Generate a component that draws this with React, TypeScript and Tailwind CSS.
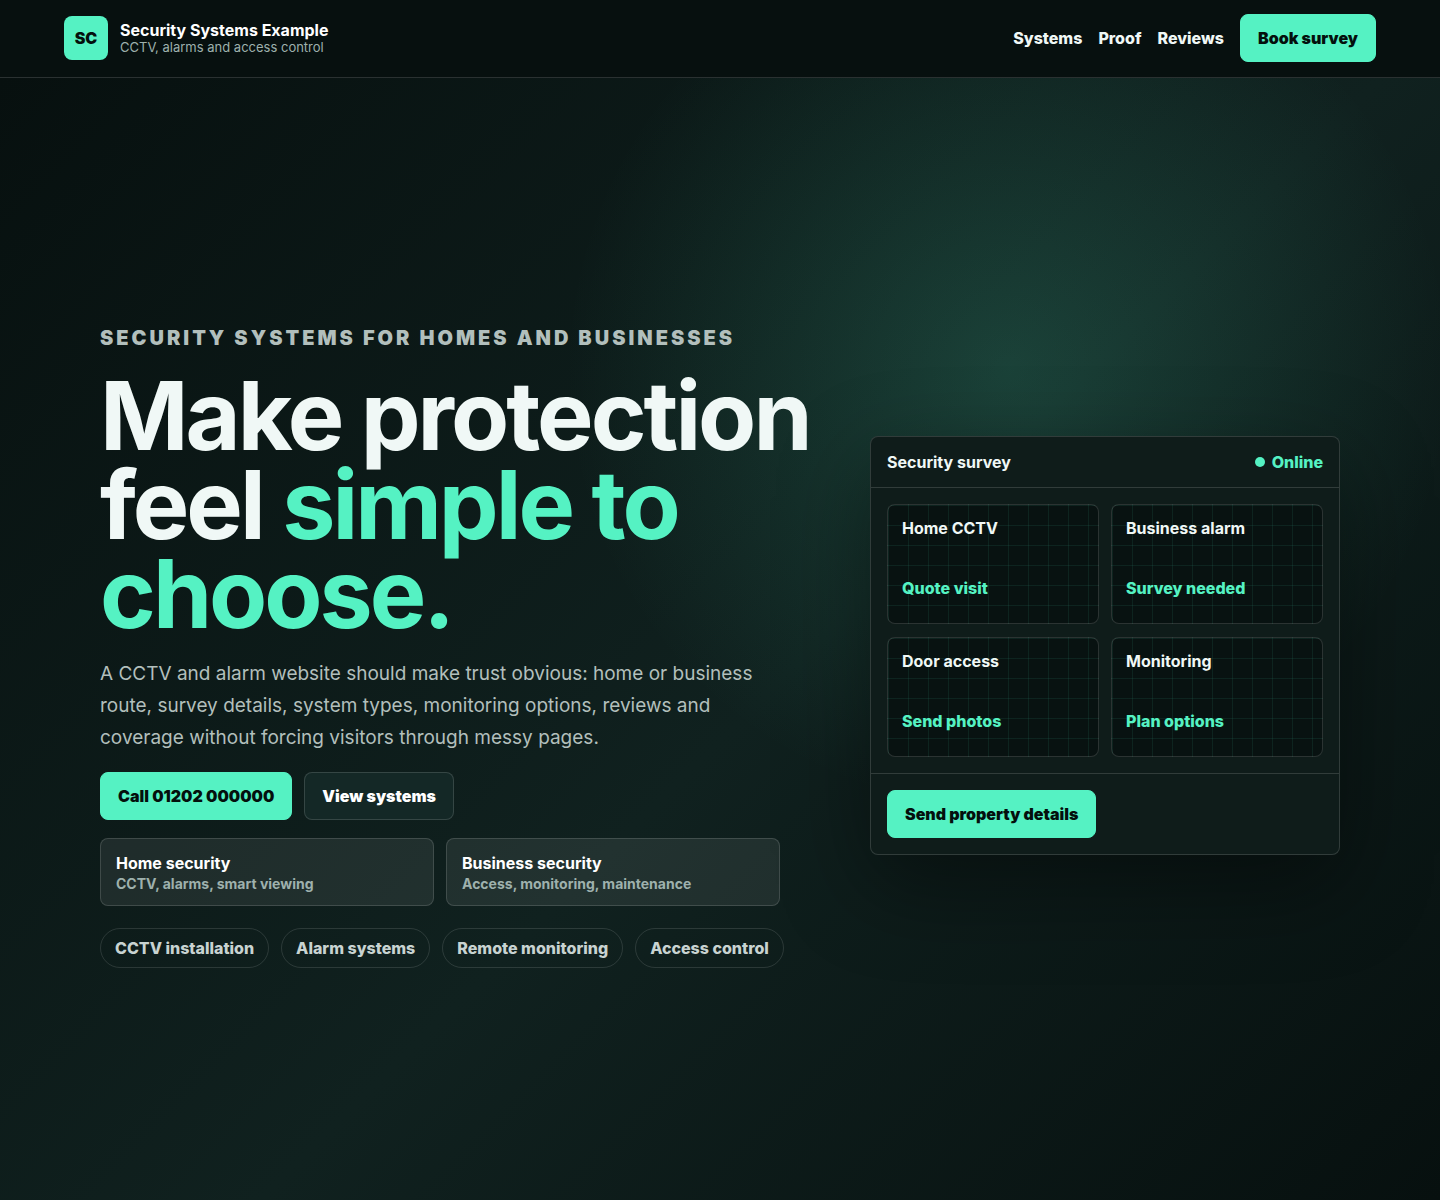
import React from "react";

const button =
  "inline-flex min-h-12 items-center justify-center rounded-lg border px-[17px] font-black";
const primary = "border-[#55f2c3] bg-[#55f2c3] text-[#04100d]";

const navItems = ["Systems", "Proof", "Reviews"];
const routes = [
  { title: "Home security", text: "CCTV, alarms, smart viewing" },
  { title: "Business security", text: "Access, monitoring, maintenance" },
];
const chips = ["CCTV installation", "Alarm systems", "Remote monitoring", "Access control"];
const zones = [
  { title: "Home CCTV", action: "Quote visit" },
  { title: "Business alarm", action: "Survey needed" },
  { title: "Door access", action: "Send photos" },
  { title: "Monitoring", action: "Plan options" },
];

function Header() {
  return (
    <header className="flex items-center justify-between border-b border-white/[0.14] bg-[#07100f] px-16 pt-3.5 pb-[15px]">
      <a href="#top" className="flex items-center gap-3">
        <span className="grid size-11 place-items-center rounded-lg bg-[#55f2c3] font-black text-[#04100d]">
          SC
        </span>
        <span className="flex flex-col pt-0.5">
          <strong className="text-base leading-[17px] font-bold text-white">
            Security Systems Example
          </strong>
          <small className="text-[13px] leading-[17px] text-[#9eb1ad]">
            CCTV, alarms and access control
          </small>
        </span>
      </a>
      <nav className="flex items-center gap-4 font-extrabold">
        {navItems.map((item) => (
          <a key={item} href={`#${item.toLowerCase()}`}>
            {item}
          </a>
        ))}
        <a href="#survey" className={`${button} ${primary}`}>
          Book survey
        </a>
      </nav>
    </header>
  );
}

function Intro() {
  return (
    <div>
      <p className="mb-[17px] text-xl leading-8 font-black tracking-[3px] text-[#b2bfbc] uppercase">
        Security systems for homes and businesses
      </p>
      <h1 className="text-[95px] leading-[89px] font-bold tracking-[-3px] text-[#f0f8f6]">
        Make protection feel <span className="text-[#55f2c3]">simple to choose.</span>
      </h1>
      <p className="mt-5 max-w-[680px] text-[19px] leading-8 text-[#b2bfbc]">
        A CCTV and alarm website should make trust obvious: home or business route, survey details,
        system types, monitoring options, reviews and coverage without forcing visitors through
        messy pages.
      </p>
      <div className="mt-[18px] flex flex-wrap gap-3">
        <a href="tel:01202000000" className={`${button} ${primary}`}>
          Call 01202 000000
        </a>
        <a href="#systems" className={`${button} border-white/[0.14] bg-[#142826] text-white`}>
          View systems
        </a>
      </div>
      <div className="mt-[18px] grid max-w-[680px] grid-cols-2 gap-3">
        {routes.map((route) => (
          <a
            key={route.title}
            href="#survey"
            className="flex flex-col rounded-lg border border-white/[0.14] bg-white/[0.08] px-[15px] py-3"
          >
            <strong className="leading-6 font-bold text-white">{route.title}</strong>
            <span className="text-sm leading-[18px] font-bold text-[#9eb1ad]">{route.text}</span>
          </a>
        ))}
      </div>
      <ul className="mt-[22px] flex flex-wrap gap-3">
        {chips.map((chip) => (
          <li
            key={chip}
            className="flex h-10 items-center rounded-full border border-white/[0.12] px-3.5 font-extrabold text-[#c8d3d1]"
          >
            {chip}
          </li>
        ))}
      </ul>
    </div>
  );
}

function SurveyPanel() {
  return (
    <section className="rounded-lg border border-white/[0.14] bg-[#0f1c1a] shadow-[0_30px_90px_rgba(0,0,0,0.42)]">
      <div className="flex items-center justify-between border-b border-white/[0.14] px-4 py-[13px] leading-6">
        <h2 className="font-bold">Security survey</h2>
        <span className="flex items-center gap-[7px] font-extrabold text-[#55f2c3]">
          <i className="size-2.5 rounded-full bg-[#55f2c3]" />
          Online
        </span>
      </div>
      <div className="grid grid-cols-2 gap-x-3 gap-y-[13px] p-4">
        {zones.map((zone) => (
          <article
            key={zone.title}
            className="min-h-[120px] rounded-lg border border-white/[0.14] bg-[#081211] bg-[linear-gradient(rgba(85,242,195,0.08)_1px,transparent_1px),linear-gradient(90deg,rgba(85,242,195,0.08)_1px,transparent_1px)] bg-[size:20px_20px] px-3.5 py-[11px]"
          >
            <h3 className="font-bold">{zone.title}</h3>
            <p className="mt-9 font-extrabold text-[#55f2c3]">{zone.action}</p>
          </article>
        ))}
      </div>
      <div className="border-t border-white/[0.14] p-4">
        <a href="#survey" className={`${button} ${primary}`}>
          Send property details
        </a>
      </div>
    </section>
  );
}

export default function App() {
  return (
    <div
      id="top"
      className="flex min-h-screen flex-col bg-[#07100f] font-[Inter,sans-serif] text-base text-[#f0f8f6]"
    >
      <Header />
      <main className="grid flex-1 grid-cols-[minmax(0,1fr)_470px] items-center gap-12 bg-[radial-gradient(circle_at_70%_26%,rgba(85,242,195,0.16),transparent_34%),linear-gradient(135deg,#07100f,#10211f_54%,#07100f)] px-[100px] pt-3">
        <Intro />
        <SurveyPanel />
      </main>
    </div>
  );
}
